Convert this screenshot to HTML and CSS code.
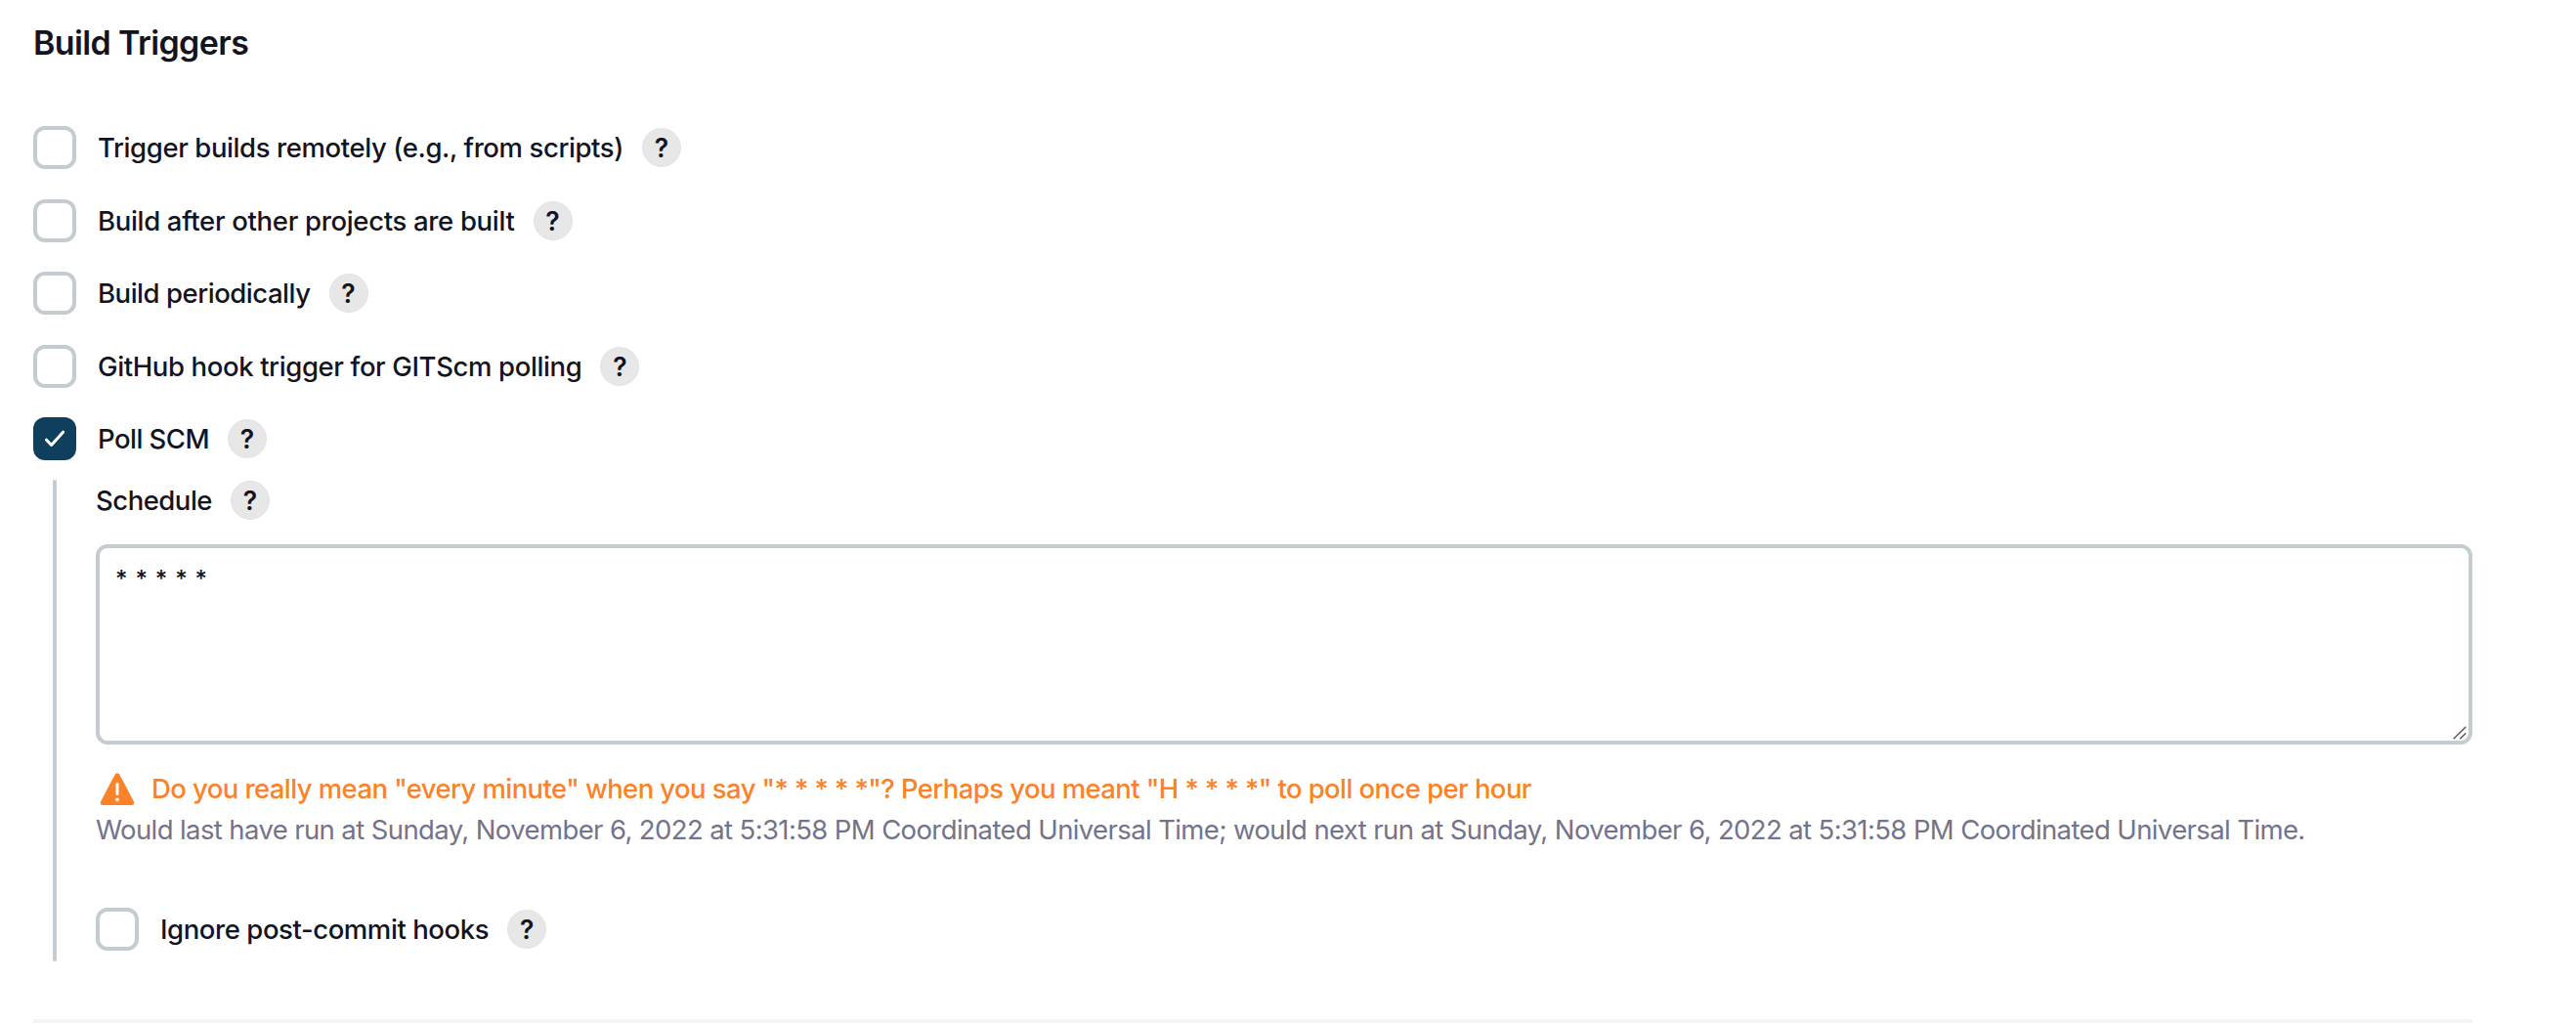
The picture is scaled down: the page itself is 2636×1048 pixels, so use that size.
FILE: index.html
```html
<!DOCTYPE html>
<html lang="en">
<head>
<meta charset="utf-8">
<title>Build Triggers</title>
<link rel="stylesheet" href="styles.css">
</head>
<body>
<main class="section">
  <h2 class="section-title">Build Triggers</h2>

  <div class="option">
    <span class="checkbox"></span>
    <span class="label label-remote">Trigger builds remotely (e.g., from scripts)</span>
    <span class="help">?</span>
  </div>
  <div class="option option-tight">
    <span class="checkbox"></span>
    <span class="label label-after">Build after other projects are built</span>
    <span class="help">?</span>
  </div>
  <div class="option">
    <span class="checkbox"></span>
    <span class="label label-periodic">Build periodically</span>
    <span class="help">?</span>
  </div>
  <div class="option option-tight">
    <span class="checkbox"></span>
    <span class="label label-github">GitHub hook trigger for GITScm polling</span>
    <span class="help">?</span>
  </div>
  <div class="option option-open">
    <span class="checkbox checkbox-checked">
      <svg width="44" height="44" viewBox="0 0 44 44"><path d="M13.5 23.2L18.6 28.5L30.6 15.2" fill="none" stroke="#fff" stroke-width="3" stroke-linecap="round" stroke-linejoin="round"/></svg>
    </span>
    <span class="label label-poll">Poll SCM</span>
    <span class="help">?</span>
  </div>

  <div class="nested">
    <div class="field-head">
      <span class="label label-schedule">Schedule</span>
      <span class="help">?</span>
    </div>
    <div class="textarea-wrap">
      <textarea class="textarea" spellcheck="false">* * * * *</textarea>
      <svg class="grip" width="16" height="16" viewBox="0 0 16 16"><path d="M1.7 14.3L14.3 1.7M8.2 14.3L14.3 8.3" fill="none" stroke="#555" stroke-width="1.4"/></svg>
    </div>
    <div class="warning">
      <svg class="warning-icon" width="36" height="34" viewBox="0 0 36 34"><path d="M15.8 1.4Q18 -1 20.2 1.4Q21 2.4 35 29.6Q36 32.8 33 33H3Q0 32.8 1 29.6Q15 2.4 15.8 1.4Z" fill="#fa8229"/><path d="M18 11.2V21.6" stroke="#fff" stroke-width="3" stroke-linecap="round"/><circle cx="18" cy="27.4" r="1.9" fill="#fff"/></svg>
      <span class="warning-text">Do you really mean "every minute" when you say "* * * * *"? Perhaps you meant "H * * * *" to poll once per hour</span>
    </div>
    <div class="next-run">Would last have run at Sunday, November 6, 2022 at 5:31:58 PM Coordinated Universal Time; would next run at Sunday, November 6, 2022 at 5:31:58 PM Coordinated Universal Time.</div>
    <div class="option option-ignore">
      <span class="checkbox"></span>
      <span class="label label-ignore">Ignore post-commit hooks</span>
      <span class="help">?</span>
    </div>
  </div>
  <hr class="divider">
</main>
</body>
</html>
```
FILE: styles.css
```css
* { box-sizing: border-box; }

body {
  margin: 0;
  background: #fff;
  color: #14141f;
  font-family: Inter, "Liberation Sans", sans-serif;
  font-size: 27.5px;
  font-weight: 500;
}

.section {
  width: 2530px;
  padding: 24px 0 0 34px;
}

.section-title {
  margin: 0 0 65px;
  font-size: 34px;
  font-weight: 600;
  line-height: 40px;
  letter-spacing: -0.62px;
}

.option {
  display: flex;
  align-items: center;
  height: 44px;
  margin-bottom: 31px;
}

.option-tight { margin-bottom: 30px; }
.option-open { margin-bottom: 20px; }
.option-ignore { margin: 59px 0 0; }

.checkbox {
  flex: none;
  width: 44px;
  height: 44px;
  margin-right: 22px;
  border: 4px solid #c4ccd0;
  border-radius: 12px;
}

.checkbox-checked {
  border: 0;
  background: #103f5e;
}

.checkbox svg { display: block; }

.label {
  white-space: nowrap;
  line-height: 40px;
}

.label-remote { letter-spacing: -0.4px; }
.label-after { letter-spacing: -0.32px; }
.label-periodic { letter-spacing: -0.47px; }
.label-github { letter-spacing: -0.38px; }
.label-poll { letter-spacing: -0.54px; }
.label-schedule { letter-spacing: -0.5px; }
.label-ignore { letter-spacing: -0.42px; }

.help {
  flex: none;
  width: 40px;
  height: 40px;
  margin-left: 19px;
  border: 1px solid #e3e3e3;
  border-radius: 50%;
  background: #e7e7e7;
  font-size: 26.5px;
  font-weight: 600;
  line-height: 38px;
  text-align: center;
}

.nested {
  position: relative;
  height: 493px;
  margin-left: 20px;
  padding: 1px 0 0 44px;
}

.nested::before {
  content: "";
  position: absolute;
  left: 0;
  top: 0;
  width: 4px;
  height: 100%;
  border-radius: 2px;
  background: #c4ccd0;
}

.field-head {
  display: flex;
  align-items: center;
  height: 40px;
  margin-bottom: 25px;
}

.textarea-wrap {
  position: relative;
  height: 205px;
}

.textarea {
  display: block;
  width: 100%;
  height: 100%;
  margin: 0;
  padding: 11px 16px;
  border: 4px solid #c4ccd0;
  border-radius: 12px;
  outline: 0;
  resize: none;
  background: #fff;
  color: inherit;
  font: inherit;
  font-size: 24px;
  line-height: 42px;
  word-spacing: 1.5px;
}

.grip {
  position: absolute;
  right: 5px;
  bottom: 4px;
}

.warning {
  display: flex;
  height: 42px;
  margin-top: 24px;
  color: #fa8229;
  line-height: 42px;
  white-space: nowrap;
}

.warning-icon {
  flex: none;
  margin: 5px 17px 0 4px;
}

.warning-text { letter-spacing: -0.585px; }

.next-run {
  color: #73738c;
  font-weight: 400;
  line-height: 42px;
  letter-spacing: -0.612px;
  white-space: nowrap;
}

.divider {
  height: 4px;
  margin: 59px 0 0;
  border: 0;
  background: #f3f3f8;
}
```
